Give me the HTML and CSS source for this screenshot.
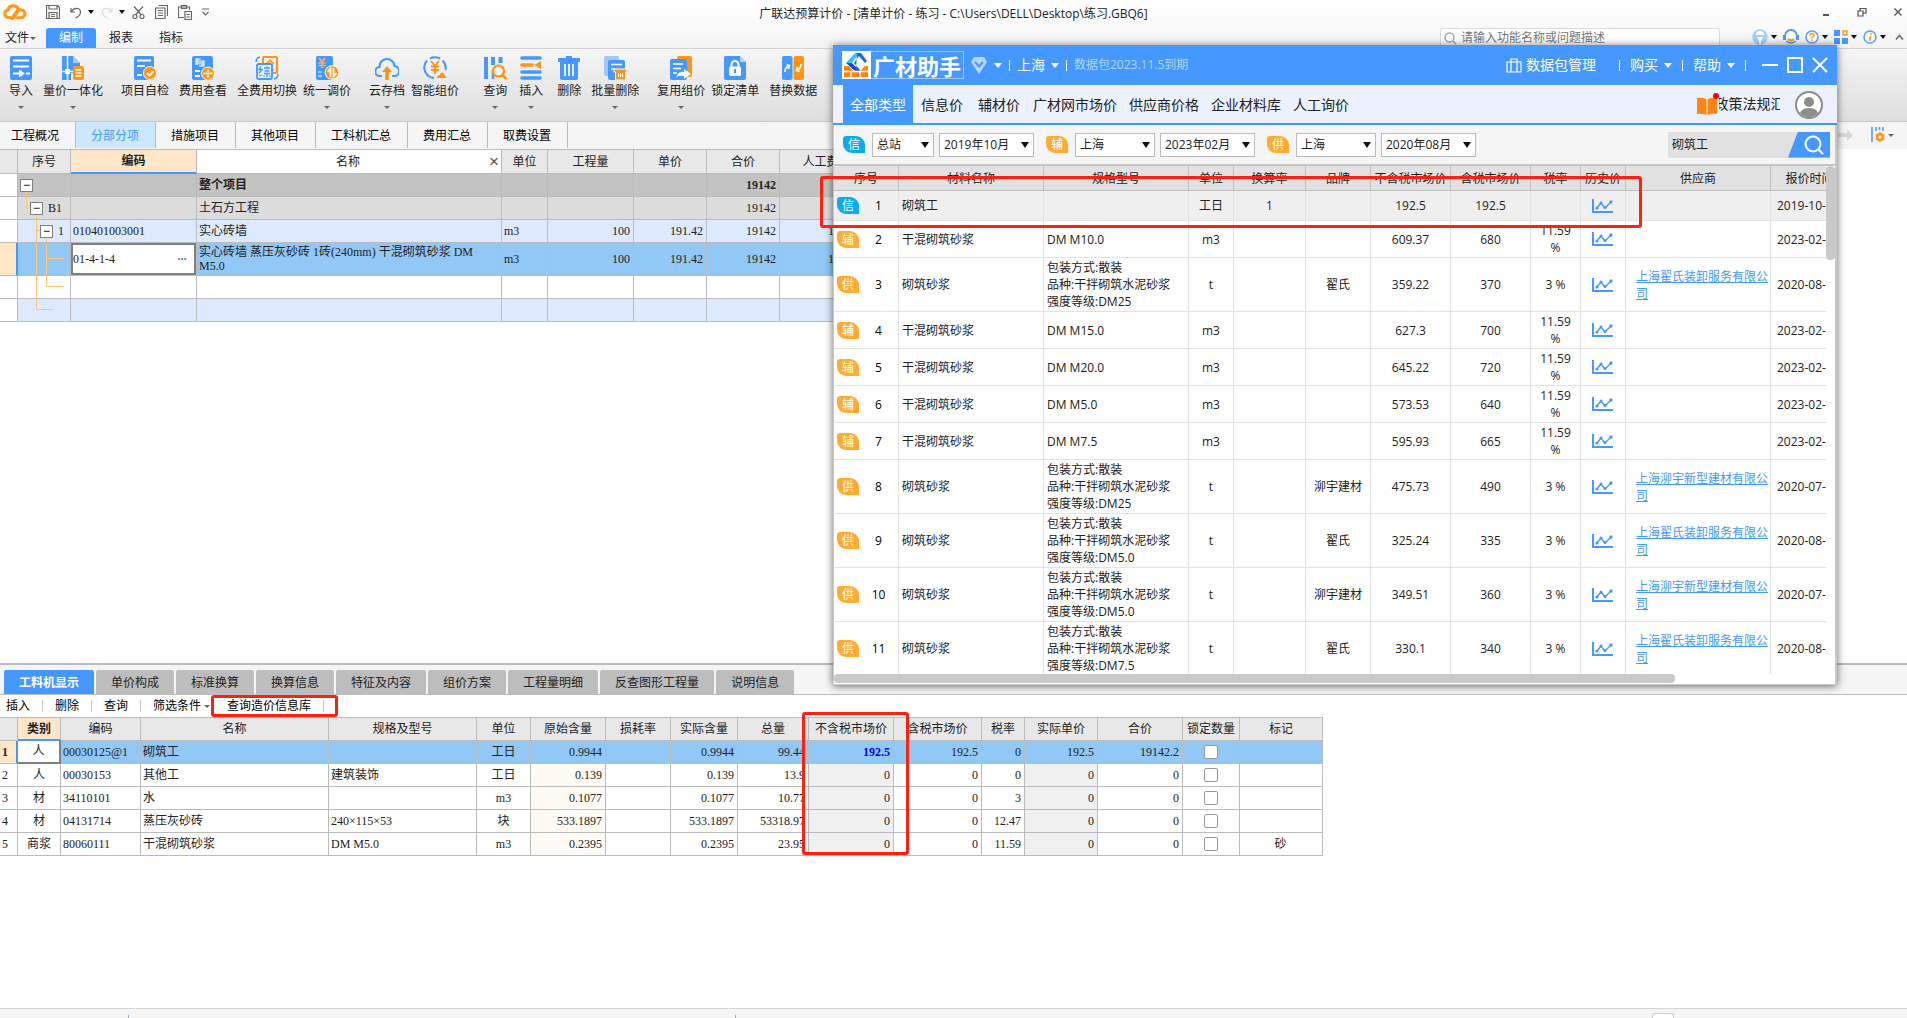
FILE: index.html
```html
<!DOCTYPE html>
<html lang="zh-CN">
<head>
<meta charset="utf-8">
<title>广联达预算计价</title>
<link rel="stylesheet" href="styles.css">
</head>
<body>
<svg class="defs" aria-hidden="true">
  <symbol id="i-chart" viewBox="0 0 22 16"><path d="M1 1v13h20" fill="none" stroke="#4498ff" stroke-width="2"/><path d="M4 11l5-6 4 5 6-6" fill="none" stroke="#4498ff" stroke-width="1.4"/><g fill="#4498ff"><circle cx="5" cy="10" r="1.5"/><circle cx="9" cy="5" r="1.5"/><circle cx="13" cy="9.500" r="1.500"/><circle cx="19" cy="4" r="1.700"/></g></symbol>
</svg>
<div class="app">
  <header class="titlebar">
    <div class="quick">
      <svg class="brand" width="24" height="18" viewBox="0 0 24 18"><g fill="none" stroke="#ff9a1c" stroke-width="3.200" stroke-linecap="round"><path d="M7 14.500H5.500a3.800 3.800 0 0 1-.6-7.500C6 2.500 13 1 15.500 6L9 15.500"/><path d="M14.500 14.800h3.500a4 4 0 1 0-3-6.800l-4 6.500"/></g></svg>
      <button aria-label="保存"><svg width="14" height="14" viewBox="0 0 14 14"><path d="M.5.500h11l2 2v11H.5zM3 .5v3.500h8V.5M3 13.500V7.500h8v6M5 9.500h4M5 11.500h4" class="ln"/></svg></button>
      <button aria-label="撤销"><svg width="12" height="13" viewBox="0 0 12 13"><path d="M1 2v4h4M1.500 5.500C4 1 11 1.500 10.500 6.500 10.200 9 8 11 5.500 12" class="ln"/></svg></button>
      <i class="tri"></i>
      <button aria-label="重做"><svg width="12" height="13" viewBox="0 0 12 13"><path d="M11 2v4H7M10.500 5.500C8 1 1 1.500 1.500 6.500 1.800 9 4 11 6.500 12" class="ln faint"/></svg></button>
      <i class="tri"></i>
      <button aria-label="剪切"><svg width="13" height="13" viewBox="0 0 13 13"><path d="M2 .5l7.500 8.500M11 .5L3.500 9" class="ln"/><circle cx="3" cy="10.500" r="2" class="ln"/><circle cx="10" cy="10.500" r="2" class="ln"/></svg></button>
      <button aria-label="复制"><svg width="13" height="14" viewBox="0 0 13 14"><path d="M3.500.500h9v10.500M.5 3h9.500v10.500H.5zM3 5.500h5M3 8h5M3 10.500h5" class="ln"/></svg></button>
      <button aria-label="粘贴"><svg width="14" height="15" viewBox="0 0 14 15"><path d="M6 12.500H.5V2h11v3M3.500.500h5v3h-5zM7 6.500h6.500v8H7zM8.500 9.500h3.500M8.500 12h3.500" class="ln"/></svg></button>
      <svg width="7" height="8" viewBox="0 0 7 8"><path d="M0 1h7M.5 4l3 3 3-3" class="ln"/></svg>
    </div>
    <h1>广联达预算计价 - [清单计价 - 练习 - C:\Users\DELL\Desktop\练习.GBQ6]</h1>
    <div class="winctl">
      <button aria-label="最小化"><svg width="10" height="10" viewBox="0 0 10 10"><path d="M2 8h6" stroke="#555" stroke-width="2"/></svg></button>
      <button aria-label="还原"><svg width="10" height="10" viewBox="0 0 10 10"><path d="M1 4h5v5H1zM3 4V1.500h6V6H6" fill="none" stroke="#555" stroke-width="1.200"/></svg></button>
      <button aria-label="关闭"><svg width="10" height="10" viewBox="0 0 10 10"><path d="M1.500 1.500l7 7M8.500 1.500l-7 7" stroke="#555" stroke-width="1.400"/></svg></button>
    </div>
  </header>

  <nav class="menubar">
    <button class="file">文件<i class="tri sm"></i></button>
    <button class="mtab on">编制</button>
    <button class="mtab">报表</button>
    <button class="mtab">指标</button>
    <div class="finder">
      <svg width="13" height="13" viewBox="0 0 13 13"><circle cx="5.500" cy="5.500" r="4.500" fill="none" stroke="#aaa" stroke-width="1.500"/><path d="M9 9l3 3" stroke="#aaa" stroke-width="1.700"/></svg>
      <input type="text" aria-label="功能搜索" placeholder="请输入功能名称或问题描述">
    </div>
    <div class="tools">
      <button aria-label="账户"><svg width="16" height="16" viewBox="0 0 16 16"><circle cx="8" cy="8" r="7.800" fill="#a4d0fb"/><path d="M4 6a4 4 0 0 1 8 0zM5 8h6l-2 4v3H7v-3z" fill="#fff"/></svg><i class="tri"></i></button>
      <button aria-label="客服"><svg width="16" height="16" viewBox="0 0 16 16"><path d="M2 9V7a6 6 0 0 1 12 0v2" fill="none" stroke="#4a9bf5" stroke-width="1.800"/><path d="M0 6h3v5H0zM13 6h3v5h-3z" fill="#4a9bf5"/><path d="M5 10q3 3 6 0" fill="none" stroke="#ff9a1c" stroke-width="2"/><path d="M3 12q5 4 10 0" fill="none" stroke="#4a9bf5" stroke-width="1.500"/></svg></button>
      <button aria-label="帮助"><svg width="14" height="14" viewBox="0 0 14 14"><circle cx="7" cy="7" r="6" fill="#fff" stroke="#55a2f8" stroke-width="1.500"/><path d="M5 5.500q0-2 2-2t2 1.800q0 1-2 2.200v1M7 9.500v1.500" fill="none" stroke="#ff9a1c" stroke-width="1.500"/></svg><i class="tri"></i></button>
      <button aria-label="应用"><svg width="14" height="14" viewBox="0 0 14 14"><path d="M0 0h6v6H0zM0 8h6v6H0zM8 8h6v6H8z" fill="#4498ff"/><path d="M9 1h4v4H9z" fill="none" stroke="#ff9a1c" stroke-width="1.500"/></svg><i class="tri"></i></button>
      <button aria-label="关于"><svg width="14" height="14" viewBox="0 0 14 14"><circle cx="7" cy="7" r="6" fill="#fff" stroke="#55a2f8" stroke-width="1.500"/><path d="M8 3l-.3 1.500M7.300 6L6.500 11" stroke="#ff9a1c" stroke-width="1.800"/></svg><i class="tri"></i></button>
      <button aria-label="折叠"><svg width="9" height="7" viewBox="0 0 9 7"><path d="M1 5.500l3.500-4 3.500 4" fill="none" stroke="#666" stroke-width="1.500"/></svg></button>
    </div>
  </nav>

  <div class="ribbon">
    <button><svg viewBox="0 0 24 24"><rect x="1" width="22" height="24" rx="2" fill="#4498ff"/><path d="M4 4.500h16M4 10.500h16" stroke="#fff" stroke-width="2"/><path d="M4 17.500h7M17 17.500h4" stroke="#fff" stroke-width="2"/><path d="M10 13.500l6 4-6 4z" fill="#fff"/></svg><span>导入</span><i class="tri sm"></i></button>
    <button><svg viewBox="0 0 24 24"><path d="M1 0h11l7 7v4h-6v6h-3v7H1z" fill="#4498ff"/><path d="M12 0l7 7h-7z" fill="#a4cdfa"/><path d="M6.500 0v24M0 15.500h12" stroke="#fff" stroke-width="1.500"/><rect x="4" y="13" width="5" height="5" fill="#fff"/><rect x="12" y="10" width="11" height="14" rx="2" fill="#ff9512"/><path d="M14.500 14h6M14.500 17h6M14.500 20h6" stroke="#fff" stroke-width="1.400"/></svg><span>量价一体化</span><i class="tri sm"></i></button>
    <button class="group"><svg viewBox="0 0 24 24"><rect x="1" width="20" height="24" rx="2" fill="#4498ff"/><path d="M4 4.500h14M4 10h8M4 19h5" stroke="#fff" stroke-width="2"/><circle cx="17" cy="17" r="6.500" fill="#ff9512" stroke="#fff"/><path d="M14 17l2.500 2.500 4-4.500" fill="none" stroke="#fff" stroke-width="2"/></svg><span>项目自检</span></button>
    <button><svg viewBox="0 0 24 24"><rect x="1" width="21" height="24" rx="2" fill="#4498ff"/><path d="M4 2h6v7H4zM8 4h6v7H8z" fill="#d6e9ff" stroke="#4498ff" stroke-width=".6"/><path d="M4 15h5M4 20h5" stroke="#fff" stroke-width="2"/><circle cx="17" cy="17.500" r="6.500" fill="#ff9512" stroke="#fff"/><path d="M12.500 17.500h9" stroke="#fff" stroke-width="1.700"/><circle cx="17" cy="14.500" r="1.200" fill="#fff"/><circle cx="17" cy="20.500" r="1.200" fill="#fff"/></svg><span>费用查看</span></button>
    <button><svg viewBox="0 0 24 24"><rect x="8" y="1" width="14" height="16" rx="1" fill="none" stroke="#ff9512" stroke-width="2"/><path d="M11 8l4-4 4 4M15 6v8M12 10h6M12 14h7" fill="none" stroke="#ff9512" stroke-width="1.500"/><rect x="2" y="8" width="15" height="15" rx="1.500" fill="#e6f1ff" stroke="#4498ff" stroke-width="1.800"/><path d="M6 10.500l-2 3h3l-3 4M4 20l3-1M9 12h6M12 10.500v2M9.500 15h5M9 17.500h6M12 17.500v3.500M9.500 19.500l-1 1M14.500 19.500l1 1" fill="none" stroke="#4498ff" stroke-width="1.300"/><path d="M1 6q0-4 4-5M23 18q0 4-4 5" fill="none" stroke="#4498ff" stroke-width="1.500"/></svg><span>全费用切换</span></button>
    <button class="tight"><svg viewBox="0 0 24 24"><rect x="1" width="17" height="24" rx="2" fill="#4498ff"/><path d="M4 2l3 4 3-4M7 6v6M3.500 7h7M3.500 9.500h7" stroke="#ffb24d" fill="none" stroke-width="1.500"/><path d="M3 16h4M3 20h4" stroke="#bcdcff" stroke-width="1.500"/><circle cx="17" cy="16.500" r="6.800" fill="#ff9512" stroke="#fff"/><path d="M15.500 21v-8.500l-3 3.500M18.500 12v8.500l3-3.500" fill="none" stroke="#fff" stroke-width="1.800"/></svg><span>统一调价</span><i class="tri sm"></i></button>
    <button class="group"><svg viewBox="0 0 24 24"><path d="M7 20H5A4.500 4.500 0 0 1 4.500 11 7.500 7.500 0 0 1 19.500 10 5 5 0 0 1 19 20h-2" fill="none" stroke="#4498ff" stroke-width="2.200"/><path d="M12 10l5 6h-3.200v8h-3.600v-8H7z" fill="#ff9512"/></svg><span>云存档</span><i class="tri sm"></i></button>
    <button class="tight"><svg viewBox="0 0 24 24"><path d="M11 22A10.500 10.500 0 0 1 4 4.500M7 2.500A10.500 10.500 0 0 1 17 2.500M19.500 4.500A10.500 10.500 0 0 1 22.500 14" fill="none" stroke="#4498ff" stroke-width="2"/><path d="M8 5l4 5 4-5M12 10v8M8 10.500h8M8 14h8" fill="none" stroke="#ff9512" stroke-width="2"/><path d="M14 22q0-3 3-3 1-4 4-1.500 0 1.500 3 4.500z" fill="#ff9512"/></svg><span>智能组价</span></button>
    <button class="wide"><svg viewBox="0 0 24 24"><path d="M3 1v22M10 1v8M17.500 1v6" stroke="#4498ff" stroke-width="4"/><path d="M10 14v9" stroke="#4498ff" stroke-width="2.500"/><circle cx="15.500" cy="15" r="5.500" fill="#f4f4f4" stroke="#ff9512" stroke-width="2.200"/><path d="M19.500 19l4 4" stroke="#ff9512" stroke-width="2.500"/></svg><span>查询</span><i class="tri sm"></i></button>
    <button class="near"><svg viewBox="0 0 24 24"><path d="M3 2h18M3 16h18M3 22h18" stroke="#4498ff" stroke-width="3.600" stroke-linecap="round"/><path d="M3 9h10" stroke="#ff9512" stroke-width="3.600" stroke-linecap="round"/><path d="M22 5v8l-7-4z" fill="#ff9512"/></svg><span>插入</span><i class="tri sm"></i></button>
    <button class="mid"><svg viewBox="0 0 24 24"><path d="M9 0h6v2h8v4h-2v16q0 2-2 2H5q-2 0-2-2V6H1V2h8z" fill="#4498ff"/><path d="M8 8v12M12 8v12M16 8v12" stroke="#fff" stroke-width="1.700"/></svg><span>删除</span></button>
    <button><svg viewBox="0 0 24 24"><rect x="1" width="15" height="20" rx="2" fill="#9ccafb"/><rect x="5" y="4" width="17" height="20" rx="2" fill="#4498ff"/><path d="M8 8.500h11M8 13h4" stroke="#fff" stroke-width="1.700"/><path d="M11 13h13v3h-1.500v8h-10v-8H11z" fill="#ff9512" stroke="#fff"/><path d="M15.500 17v4M17.500 17v4M19.500 17v4" stroke="#fff"/></svg><span>批量删除</span><i class="tri sm"></i></button>
    <button class="group"><svg viewBox="0 0 24 24"><rect x="8" width="15" height="21" rx="2" fill="#ff9512"/><rect x="1" y="3" width="17" height="21" rx="2" fill="#4498ff"/><path d="M4 8h10M4 12.500h8M4 17h4" stroke="#fff" stroke-width="1.700"/><path d="M7 21q3-6 8-5v-3l7 5-7 5v-3q-4-1-8 1z" fill="#fff"/></svg><span>复用组价</span><i class="tri sm"></i></button>
    <button class="tight"><svg viewBox="0 0 24 24"><path d="M3 0h14l6 6v16q0 2-2 2H3q-2 0-2-2V2q0-2 2-2z" fill="#4498ff"/><path d="M17 0l6 6h-6z" fill="#b9d9fb"/><rect x="6" y="10.500" width="12" height="9.500" rx="1.500" fill="#fff"/><path d="M8.500 11V8.500a3.500 3.500 0 0 1 7 0V11" fill="none" stroke="#fff" stroke-width="2"/><path d="M12 13v4" stroke="#4498ff" stroke-width="2.200"/></svg><span>锁定清单</span></button>
    <button><svg viewBox="0 0 24 24"><rect x="1" width="10.500" height="24" rx="2" fill="#4498ff"/><rect x="12.500" width="10.500" height="24" rx="2" fill="#ff9512"/><path d="M4 16q0-5 4-6M5.500 8.500l3 1-1 3.500M20 8q0 5-4 6M18.500 15.500l-3-1 1-3.500" fill="none" stroke="#fff" stroke-width="1.700"/></svg><span>替换数据</span></button>
  </div>

  <div class="sheets">
    <button class="first">工程概况</button><button class="on">分部分项</button><button>措施项目</button><button>其他项目</button><button>工料机汇总</button><button>费用汇总</button><button>取费设置</button>
    <div class="nav-end">
      <svg width="16" height="12" viewBox="0 0 16 12"><path d="M0 4h9V0l6 6-6 6V8H0z" fill="#d8d8d8"/></svg>
      <button aria-label="列设置"><svg width="14" height="16" viewBox="0 0 14 16"><path d="M1 0v15M5 0v4M8.500 0v3M12 0v4" stroke="#4498ff" stroke-width="1.500"/><circle cx="9" cy="10" r="3" fill="none" stroke="#ff9512" stroke-width="2.500"/><path d="M9 5v10M4.500 7.500l9 5M4.500 12.500l9-5" stroke="#ff9512" stroke-width="1.400"/><circle cx="9" cy="10" r="1.500" fill="#fff"/></svg><i class="tri sm"></i></button>
    </div>
  </div>

  <main class="upper">
    <table class="grid bill">
      <colgroup><col><col><col><col><col><col><col><col><col></colgroup>
      <thead><tr><th></th><th>序号</th><th class="cur">编码</th><th class="name"><div><span>名称</span><button aria-label="关闭列">×</button></div></th><th>单位</th><th>工程量</th><th>单价</th><th>合价</th><th>人工费</th></tr></thead>
      <tbody>
        <tr class="lv0"><td></td><td class="tree"><svg width="52" height="22"><path d="M8.500 17v5"/></svg><button class="t0" aria-label="收起">−</button></td><td></td><td>整个项目</td><td></td><td></td><td></td><td class="r">19142</td><td></td></tr>
        <tr class="lv1"><td></td><td class="tree"><svg width="52" height="22"><path d="M8.500 0v11h4M18.500 17v5"/></svg><button class="t1" aria-label="收起">−</button>B1</td><td></td><td>土石方工程</td><td></td><td></td><td></td><td class="r">19142</td><td></td></tr>
        <tr class="lv2"><td></td><td class="tree"><svg width="52" height="22"><path d="M18.500 0v22M18.500 10.500h4M28.500 17v5"/></svg><button class="t2" aria-label="收起">−</button>1</td><td>010401003001</td><td>实心砖墙</td><td>m3</td><td class="r">100</td><td class="r">191.42</td><td class="r">19142</td><td class="r">19142</td></tr>
        <tr class="sel"><td></td><td class="tree"><svg width="52" height="32"><path d="M18.500 0v32M28.500 0v32M28.500 15.500h17"/></svg></td><td class="edit"><div><input type="text" aria-label="编码" value="01-4-1-4"><button aria-label="选择">•••</button></div></td><td class="wrap">实心砖墙 蒸压灰砂砖 1砖(240mm) 干混砌筑砂浆 DM M5.0</td><td>m3</td><td class="r">100</td><td class="r">191.42</td><td class="r">19142</td><td class="r">19142</td></tr>
        <tr><td></td><td class="tree"><svg width="52" height="22"><path d="M18.500 0v22M28.500 0v10.500h17"/></svg></td><td></td><td></td><td></td><td></td><td></td><td></td><td></td></tr>
        <tr class="lv2"><td></td><td class="tree"><svg width="52" height="22"><path d="M18.500 0v10.500h17"/></svg></td><td></td><td></td><td></td><td></td><td></td><td></td><td></td></tr>
      </tbody>
    </table>
  </main>

  <section class="lower">
    <div class="dtabs"><button class="on">工料机显示</button><button>单价构成</button><button>标准换算</button><button>换算信息</button><button>特征及内容</button><button>组价方案</button><button>工程量明细</button><button>反查图形工程量</button><button>说明信息</button></div>
    <div class="dbar"><button>插入</button><button>删除</button><button>查询</button><button class="filter">筛选条件<i class="tri sm"></i></button><button class="hot">查询造价信息库</button></div>
    <div class="res-wrap">
    <table class="grid res">
      <colgroup><col><col><col><col><col><col><col><col><col><col><col><col><col><col><col><col><col></colgroup>
      <thead><tr><th></th><th class="cur">类别</th><th>编码</th><th>名称</th><th>规格及型号</th><th>单位</th><th>原始含量</th><th>损耗率</th><th>实际含量</th><th>总量</th><th>不含税市场价</th><th>含税市场价</th><th>税率</th><th>实际单价</th><th>合价</th><th>锁定数量</th><th>标记</th></tr></thead>
      <tbody>
        <tr class="sel"><td>1</td><td>人</td><td>00030125@1</td><td>砌筑工</td><td></td><td>工日</td><td>0.9944</td><td></td><td>0.9944</td><td>99.44</td><td>192.5</td><td>192.5</td><td>0</td><td>192.5</td><td>19142.2</td><td><input type="checkbox" aria-label="锁定第1行"></td><td></td></tr>
        <tr><td>2</td><td>人</td><td>00030153</td><td>其他工</td><td>建筑装饰</td><td>工日</td><td>0.139</td><td></td><td>0.139</td><td>13.9</td><td>0</td><td>0</td><td>0</td><td>0</td><td>0</td><td><input type="checkbox" aria-label="锁定第2行"></td><td></td></tr>
        <tr><td>3</td><td>材</td><td>34110101</td><td>水</td><td></td><td>m3</td><td>0.1077</td><td></td><td>0.1077</td><td>10.77</td><td>0</td><td>0</td><td>3</td><td>0</td><td>0</td><td><input type="checkbox" aria-label="锁定第3行"></td><td></td></tr>
        <tr><td>4</td><td>材</td><td>04131714</td><td>蒸压灰砂砖</td><td>240×115×53</td><td>块</td><td>533.1897</td><td></td><td>533.1897</td><td>53318.97</td><td>0</td><td>0</td><td>12.47</td><td>0</td><td>0</td><td><input type="checkbox" aria-label="锁定第4行"></td><td></td></tr>
        <tr><td>5</td><td>商浆</td><td>80060111</td><td>干混砌筑砂浆</td><td>DM M5.0</td><td>m3</td><td>0.2395</td><td></td><td>0.2395</td><td>23.95</td><td>0</td><td>0</td><td>11.59</td><td>0</td><td>0</td><td><input type="checkbox" aria-label="锁定第5行"></td><td>砂</td></tr>
      </tbody>
    </table>
    </div>
  </section>
  <footer class="status"><i></i><i></i><b></b></footer>
</div>

<section class="helper" aria-label="广材助手">
  <header class="h-title">
    <div class="h-logo">
      <svg width="29" height="28" viewBox="0 0 29 28"><path d="M0 0h29v28H0z" fill="#fff"/><path d="M13 2L4 12h6l7-10z" fill="#2cc5ff"/><path d="M4 12l9 8h5l-8-8z" fill="#0a4fc4"/><path d="M15 2h4l6 8-2 2-6-7-5 7 6 7h-4" fill="#1568e0"/><path d="M2 15h5l5 5h6l5-5h3v11H2z" fill="#ff8412"/><path d="M2 20.500h24M9 20v6M18 20v6" stroke="#fff" stroke-width="1.300"/></svg>
      <strong>广材助手</strong>
    </div>
    <svg class="gem" width="16" height="17" viewBox="0 0 16 17"><path d="M3 0h10l3 5-8 12L0 5z" fill="#b5d8ff"/><path d="M4 5l4 4.500L12 5" fill="none" stroke="#4498ff" stroke-width="2"/></svg>
    <i class="dn"></i><i class="bar"></i>
    <button>上海<i class="dn"></i></button><i class="bar"></i>
    <span class="exp">数据包2023.11.5到期</span>
    <div class="h-right">
      <button class="pkg"><svg width="16" height="15" viewBox="0 0 16 15"><path d="M1 4h14v10H1zM5 4V1h6v3M5 4v10M11 4v10" fill="none" stroke="#fff" stroke-width="1.200"/></svg>数据包管理</button><i class="bar"></i>
      <button>购买<i class="dn"></i></button><i class="bar"></i>
      <button>帮助<i class="dn"></i></button><i class="bar"></i>
      <button class="win" aria-label="最小化"><svg width="16" height="16" viewBox="0 0 16 16"><path d="M0 8h16" stroke="#fff" stroke-width="2"/></svg></button>
      <button class="win" aria-label="最大化"><svg width="16" height="16" viewBox="0 0 16 16"><path d="M1 1h14v14H1z" fill="none" stroke="#fff" stroke-width="2"/></svg></button>
      <button class="win" aria-label="关闭"><svg width="16" height="16" viewBox="0 0 16 16"><path d="M1 1l14 14M15 1L1 15" stroke="#fff" stroke-width="2"/></svg></button>
    </div>
  </header>
  <nav class="h-tabs">
    <button class="on">全部类型</button><button>信息价</button><button>辅材价</button><button>广材网市场价</button><button>供应商价格</button><button>企业材料库</button><button>人工询价</button>
    <a class="law" href="#"><svg width="22" height="24" viewBox="0 0 22 24"><path d="M0 6q5-1 9 1v16q-4-2-9-1zM20 6q-5-1-9 1v16q4-2 9-1z" fill="#ff8412"/><path d="M10 7v16" stroke="#ffc58a" stroke-width="2"/><circle cx="19" cy="4" r="3" fill="#f00"/></svg><span>政策法规汇</span></a>
    <button class="me" aria-label="用户"><svg width="28" height="28" viewBox="0 0 28 28"><circle cx="14" cy="14" r="13" fill="#fff" stroke="#8c8c8c" stroke-width="2"/><circle cx="14" cy="11" r="5" fill="#8c8c8c"/><path d="M5 22q2-5 9-5t9 5q-4 4-9 4t-9-4z" fill="#8c8c8c"/></svg></button>
  </nav>
  <div class="h-filter">
    <span class="tag info">信</span>
    <span class="sel-box w1"><select aria-label="信息价地区"><option>总站</option></select></span>
    <span class="sel-box w3"><select aria-label="信息价月份"><option>2019年10月</option></select></span>
    <span class="tag">辅</span>
    <span class="sel-box w2"><select aria-label="辅材价地区"><option>上海</option></select></span>
    <span class="sel-box w3"><select aria-label="辅材价月份"><option>2023年02月</option></select></span>
    <span class="tag">供</span>
    <span class="sel-box w2"><select aria-label="供应商地区"><option>上海</option></select></span>
    <span class="sel-box w3"><select aria-label="供应商月份"><option>2020年08月</option></select></span>
    <div class="h-search"><input type="text" aria-label="材料搜索" value="砌筑工"><button aria-label="搜索"><svg width="20" height="20" viewBox="0 0 20 20"><circle cx="9" cy="9" r="7.500" fill="none" stroke="#fff" stroke-width="2"/><path d="M14 14l5 5" stroke="#fff" stroke-width="2"/></svg></button></div>
  </div>
  <div class="h-body">
    <div class="h-scroll">
      <table class="mat">
        <colgroup><col><col><col><col><col><col><col><col><col><col><col><col></colgroup>
        <thead><tr><th>序号</th><th>材料名称</th><th>规格型号</th><th>单位</th><th>换算率</th><th>品牌</th><th>不含税市场价</th><th>含税市场价</th><th>税率</th><th>历史价</th><th>供应商</th><th>报价时间</th></tr></thead>
        <tbody>
          <tr class="hl"><td><div><span class="tag info">信</span><b>1</b></div></td><td>砌筑工</td><td></td><td>工日</td><td>1</td><td></td><td>192.5</td><td>192.5</td><td></td><td><svg><use href="#i-chart"/></svg></td><td></td><td>2019-10-01</td></tr>
          <tr><td><div><span class="tag">辅</span><b>2</b></div></td><td>干混砌筑砂浆</td><td>DM M10.0</td><td>m3</td><td></td><td></td><td>609.37</td><td>680</td><td>11.59 %</td><td><svg><use href="#i-chart"/></svg></td><td></td><td>2023-02-01</td></tr>
          <tr><td><div><span class="tag">供</span><b>3</b></div></td><td>砌筑砂浆</td><td>包装方式:散装<br>品种:干拌砌筑水泥砂浆<br>强度等级:DM25</td><td>t</td><td></td><td>翟氏</td><td>359.22</td><td>370</td><td>3 %</td><td><svg><use href="#i-chart"/></svg></td><td><a href="#">上海翟氏装卸服务有限公司</a></td><td>2020-08-01</td></tr>
          <tr><td><div><span class="tag">辅</span><b>4</b></div></td><td>干混砌筑砂浆</td><td>DM M15.0</td><td>m3</td><td></td><td></td><td>627.3</td><td>700</td><td>11.59 %</td><td><svg><use href="#i-chart"/></svg></td><td></td><td>2023-02-01</td></tr>
          <tr><td><div><span class="tag">辅</span><b>5</b></div></td><td>干混砌筑砂浆</td><td>DM M20.0</td><td>m3</td><td></td><td></td><td>645.22</td><td>720</td><td>11.59 %</td><td><svg><use href="#i-chart"/></svg></td><td></td><td>2023-02-01</td></tr>
          <tr><td><div><span class="tag">辅</span><b>6</b></div></td><td>干混砌筑砂浆</td><td>DM M5.0</td><td>m3</td><td></td><td></td><td>573.53</td><td>640</td><td>11.59 %</td><td><svg><use href="#i-chart"/></svg></td><td></td><td>2023-02-01</td></tr>
          <tr><td><div><span class="tag">辅</span><b>7</b></div></td><td>干混砌筑砂浆</td><td>DM M7.5</td><td>m3</td><td></td><td></td><td>595.93</td><td>665</td><td>11.59 %</td><td><svg><use href="#i-chart"/></svg></td><td></td><td>2023-02-01</td></tr>
          <tr><td><div><span class="tag">供</span><b>8</b></div></td><td>砌筑砂浆</td><td>包装方式:散装<br>品种:干拌砌筑水泥砂浆<br>强度等级:DM25</td><td>t</td><td></td><td>泖宇建材</td><td>475.73</td><td>490</td><td>3 %</td><td><svg><use href="#i-chart"/></svg></td><td><a href="#">上海泖宇新型建材有限公司</a></td><td>2020-07-01</td></tr>
          <tr><td><div><span class="tag">供</span><b>9</b></div></td><td>砌筑砂浆</td><td>包装方式:散装<br>品种:干拌砌筑水泥砂浆<br>强度等级:DM5.0</td><td>t</td><td></td><td>翟氏</td><td>325.24</td><td>335</td><td>3 %</td><td><svg><use href="#i-chart"/></svg></td><td><a href="#">上海翟氏装卸服务有限公司</a></td><td>2020-08-01</td></tr>
          <tr><td><div><span class="tag">供</span><b>10</b></div></td><td>砌筑砂浆</td><td>包装方式:散装<br>品种:干拌砌筑水泥砂浆<br>强度等级:DM5.0</td><td>t</td><td></td><td>泖宇建材</td><td>349.51</td><td>360</td><td>3 %</td><td><svg><use href="#i-chart"/></svg></td><td><a href="#">上海泖宇新型建材有限公司</a></td><td>2020-07-01</td></tr>
          <tr><td><div><span class="tag">供</span><b>11</b></div></td><td>砌筑砂浆</td><td>包装方式:散装<br>品种:干拌砌筑水泥砂浆<br>强度等级:DM7.5</td><td>t</td><td></td><td>翟氏</td><td>330.1</td><td>340</td><td>3 %</td><td><svg><use href="#i-chart"/></svg></td><td><a href="#">上海翟氏装卸服务有限公司</a></td><td>2020-08-01</td></tr>
        </tbody>
      </table>
    </div>
    <div class="vbar"><i></i></div>
  </div>
  <div class="hbar"><i></i></div>
  <div class="mark mark-row"></div>
</section>
</body>
</html>
```
FILE: styles.css
```css
*, *::after { box-sizing: border-box; }
html, body { height: 100%; margin: 0; }
body {
  position: relative;
  overflow: hidden;
  background: #fff;
  color: #222;
  font: 12px/16px "Open Sans", "Noto Sans CJK SC", sans-serif;
}
button { border: 0; padding: 0; margin: 0; background: none; font: inherit; color: inherit; white-space: nowrap; }
input, select { font: inherit; color: inherit; margin: 0; }
svg { flex: none; }
.defs { position: absolute; width: 0; height: 0; }
.tri { flex: none; display: inline-block; border: 3px solid transparent; border-top: 4px solid #111; border-bottom: 0; }
.tri.sm { border-top: 3px solid #666; }
.ln { fill: none; stroke: #666; stroke-width: 1.2; }
.ln.faint { stroke: #ddd; }

.app { height: 100%; display: flex; flex-direction: column; }

/* window title */
.titlebar { flex: none; height: 28px; display: grid; grid-template-columns: 1fr auto 1fr; background: linear-gradient(#fff, #f9f9f9); }
.titlebar h1 { margin: 0; font-size: 12px; font-weight: 400; line-height: 28px; }
.quick { display: flex; align-items: center; gap: 10px; padding: 0 0 4px 3px; }
.quick svg { display: block; }
.quick .brand { margin-right: 9px; }
.quick .tri { margin: 0 -3px 0 -4px; }
.winctl { display: flex; justify-content: flex-end; align-items: center; gap: 26px; padding: 0 4px 4px 0; }
.winctl svg { display: block; }

.menubar { flex: none; height: 21px; display: flex; align-items: stretch; border-bottom: 1px solid #d4d4d4; background: linear-gradient(#f9f9f9, #f3f3f3); }
.file { width: 46px; padding-left: 5px; display: flex; align-items: center; gap: 1px; }
.mtab { width: 50px; }
.mtab.on { background: #4498ff; color: #fff; border-radius: 3px 3px 0 0; }
.finder { margin-left: auto; width: 280px; display: flex; align-items: center; gap: 4px; padding: 0 3px; background: #fff; border: 1px solid #ddd; border-radius: 3px; }
.finder input { flex: 1; min-width: 0; height: 16px; padding: 0; border: 0; background: none; outline: 0; }
.finder input::placeholder { color: #777; opacity: 1; }
.tools { display: flex; align-items: center; gap: 6px; padding: 0 3px 2px 32px; }
.tools button { display: flex; align-items: center; gap: 3px; }
.tools button:last-child { padding-left: 3px; }

.ribbon { flex: none; height: 73px; display: flex; align-items: flex-start; padding: 7px 9px 0; border-bottom: 1px solid #cacaca; background: linear-gradient(#f5f5f5, #dedede); }
.ribbon button { display: flex; flex-direction: column; align-items: center; }
.ribbon button + button { margin-left: 10px; }
.ribbon button + .tight { margin-left: 6px; }
.ribbon button + .near { margin-left: 12px; }
.ribbon button + .mid { margin-left: 14px; }
.ribbon button + .group { margin-left: 18px; }
.ribbon button + .wide { margin-left: 24px; }
.ribbon svg { width: 24px; height: 24px; }
.ribbon span { margin: 2px 0 6px; line-height: 18px; }

.sheets { flex: none; height: 27px; display: flex; align-items: stretch; padding-bottom: 1px; background: #f5f5f5; }
.sheets > button { padding: 1px 16px 0 15px; border-right: 1px solid #bbb; color: #000; }
.sheets > .first { padding-left: 11px; }
.sheets > .on { background: #cce8ff; color: #4498ff; }
.nav-end { margin-left: auto; display: flex; align-items: center; gap: 17px; padding-right: 13px; }
.nav-end button { display: flex; align-items: center; gap: 3px; }

.upper { flex: 3 1 0; min-height: 0; overflow: hidden; }
.lower { flex: 2 1 0; min-height: 0; overflow: hidden; border-top: 2px solid #bbb; background: #fff; }

/* data grids */
.grid { table-layout: fixed; border-collapse: separate; border-spacing: 0; font: 12px/14px "Liberation Serif", "Noto Sans CJK SC", serif; }
.grid th, .grid td { height: 23px; padding: 0 2px 1px; border-right: 1px solid #bbb; border-bottom: 1px solid #bbb; white-space: nowrap; overflow: hidden; }
.grid th { height: 24px; padding-bottom: 0; border-top: 1px solid #bbb; background: #e8e8e8; font-weight: 400; text-align: center; }
.grid .cur { background: #ffe6c8; border-bottom: 2px solid #4498ff; font-weight: 700; }
.grid .r { text-align: right; padding-right: 3px; }
.grid .sel > td { background: #92c8f6; }
.grid .sel > td:first-child { background: #ffe6c8; border-right: 2px solid #4498ff; }

.bill { width: 862px; }
.bill th { height: 25px; }
.bill col:nth-child(1) { width: 18px; }
.bill col:nth-child(2) { width: 53px; }
.bill col:nth-child(3) { width: 126px; }
.bill col:nth-child(4) { width: 305px; }
.bill col:nth-child(5) { width: 46px; }
.bill col:nth-child(6) { width: 86px; }
.bill col:nth-child(7) { width: 73px; }
.bill col:nth-child(8) { width: 73px; }
.bill col:nth-child(9) { width: 82px; }
.bill .name { background: #fff; }
.name div { display: flex; align-items: center; }
.name span { flex: 1; padding-left: 8px; }
.name button { font: 17px/14px "Liberation Sans", sans-serif; color: #555; }
.bill .lv0 td { background: #c3c3c3; font-weight: 700; }
.bill .lv1 td { background: #dcdcdc; }
.bill .lv2 td { background: #dce9ff; }
.bill tbody tr:not(.sel) td:first-child { background: #fff; }
.bill .sel td { height: 33px; }
.bill .sel .wrap { white-space: normal; }
.tree { position: relative; }
.tree svg { position: absolute; left: 0; top: 0; }
.tree svg path { fill: none; stroke: #ffc673; stroke-width: 1; }
.tree button { position: relative; width: 13px; height: 13px; margin-right: 5px; border: 1px solid #808080; background: #fff; font: 12px/11px "Liberation Sans", sans-serif; color: #000; }
.tree .t1 { margin-left: 10px; }
.tree .t2 { margin-left: 20px; }
.grid .edit { padding: 0; }
.edit div { display: flex; align-items: center; height: 32px; border: 2px solid #808080; background: #fff; }
.edit input { flex: 1; min-width: 0; padding: 0; border: 0; outline: 0; }
.edit button { width: 24px; text-align: center; font-size: 9px; color: #3a8ad0; }

/* lower detail panel */
.dtabs { display: flex; gap: 2px; padding: 5px 4px 0; background: #f5f5f5; border-bottom: 1px solid #bbb; }
.dtabs button { height: 24px; padding: 1px 15px 0; background: #bdbdbd; border-radius: 2px 2px 0 0; }
.dtabs .on { background: #4498ff; color: #fff; font-weight: 700; }
.dbar { height: 22px; display: flex; align-items: center; padding-left: 6px; color: #000; }
.dbar button { display: flex; align-items: center; height: 12px; padding-right: 12px; margin-right: 12px; border-right: 1px solid #ccc; }
.dbar .filter { border: 0; padding: 0; gap: 3px; margin: 0; }
.dbar .hot { position: relative; margin-left: 17px; }
.dbar .hot::after { content: ""; position: absolute; inset: -5px -15px -5px -16px; border: 3px solid #ff2010; border-radius: 3px; }
.res-wrap { position: relative; width: 1323px; }
.res-wrap::after { content: ""; position: absolute; left: 802px; top: -5px; width: 107px; height: 143px; border: 3px solid #ff2010; border-radius: 3px; }
.res { width: 1323px; }
.res col:nth-child(1) { width: 18px; }
.res col:nth-child(2) { width: 43px; }
.res col:nth-child(3) { width: 80px; }
.res col:nth-child(4) { width: 188px; }
.res col:nth-child(5) { width: 148px; }
.res col:nth-child(6) { width: 54px; }
.res col:nth-child(7) { width: 75px; }
.res col:nth-child(8) { width: 65px; }
.res col:nth-child(9) { width: 67px; }
.res col:nth-child(10) { width: 71px; }
.res col:nth-child(11) { width: 85px; }
.res col:nth-child(12) { width: 88px; }
.res col:nth-child(13) { width: 43px; }
.res col:nth-child(14) { width: 73px; }
.res col:nth-child(15) { width: 85px; }
.res col:nth-child(16) { width: 57px; }
.res col:nth-child(17) { width: 83px; }
.res td:nth-child(n+7) { text-align: right; padding-right: 3px; }
.res td:nth-child(1) { background: #fff; }
.res td:nth-child(2), .res td:nth-child(6), .res td:nth-child(n+16) { text-align: center; }
.res tr:not(.sel) td:nth-child(7) { background: #fffaf4; }
.res tr:not(.sel) td:nth-child(11), .res tr:not(.sel) td:nth-child(14) { background: #f0f0f0; }
.res .sel td:nth-child(1) { font-weight: 700; }
.res .sel td:nth-child(2) { background: #fff; border-right: 2px solid #808080; border-bottom: 2px solid #808080; }
.res .sel td:nth-child(11) { color: #00f; font-weight: 700; }
.res input { appearance: none; display: inline-block; vertical-align: middle; width: 14px; height: 14px; border: 1px solid #999; border-radius: 2px; background: #fff; }

.status { flex: none; height: 10px; display: grid; grid-template-columns: 129px 607px 1fr 255px; align-items: end; border-top: 1px solid #d4d4d4; background: #f4f4f4; }
.status i { height: 3px; border-right: 1px solid #9ab; }
.status b { grid-column: 4; width: 22px; height: 5px; background: #fff; border: 1px solid #ccc; border-bottom: 0; border-radius: 3px 3px 0 0; }

/* floating assistant window */
.helper {
  position: absolute; left: 833px; right: 70px; top: 45px; height: 640px;
  display: flex; flex-direction: column;
  background: #fff; border: solid #c8c8c8; border-width: 0 2px 1px 1px;
  box-shadow: 0 1px 8px rgba(0, 0, 0, .6);
}
.h-title { flex: none; height: 40px; display: flex; align-items: center; gap: 7px; padding: 0 9px; margin: 0 -2px 0 -1px; background: #4498ff; color: #fff; font-size: 14px; line-height: 20px; }
.h-logo { display: flex; align-items: center; width: 122px; height: 28px; border: 1px solid #9ccafb; border-left: 0; }
.h-logo strong { padding-left: 2px; font: 700 22px/26px "Noto Sans CJK SC", sans-serif; }
.h-title button { display: flex; align-items: center; gap: 6px; }
.dn { flex: none; display: inline-block; border: 4px solid transparent; border-top: 5px solid #fff; border-bottom: 0; }
.bar { flex: none; width: 1px; height: 11px; background: #fff; }
.exp { font-size: 12px; color: #b0d5ff; }
.h-right { margin-left: auto; display: flex; align-items: center; gap: 10px; }
.h-title .pkg { gap: 4px; margin-right: 13px; }
.h-title .bar + .win { margin-left: 6px; }
.win + .win { margin-left: -1px; }

.h-tabs { flex: none; height: 40px; display: flex; align-items: stretch; margin: 0 -2px 0 -1px; padding: 0 14px 0 10px; border-bottom: 2px solid #4498ff; background: #ebf1ff; font-size: 14px; }
.h-tabs > button { padding: 2px 6px 0; }
.h-tabs > .on { padding: 2px 7px 0; background: #4498ff; color: #fff; }
.h-tabs > .on + button { padding: 2px 8px 0; }
.h-tabs > .on + button + button { padding: 2px 7px 0; }
.law { margin-left: auto; display: flex; align-items: center; color: inherit; text-decoration: none; }
.law span { width: 61px; display: flex; justify-content: center; overflow: hidden; white-space: nowrap; }
.h-tabs > .me { padding: 4px 0 0 15px; }

.h-filter { flex: none; height: 39px; display: flex; align-items: center; gap: 5px; padding: 0 5px 0 9px; background: #f5f5f5; }
.tag { flex: none; width: 22px; height: 17px; border-radius: 3px 9px 0 9px; background: #ffac35; color: #fff; text-align: center; line-height: 17px; }
.tag.info { background: #0cabf2; }
.h-filter .tag { margin-right: 2px; }
.h-filter .sel-box + .tag { margin-left: 7px; }
.sel-box { position: relative; height: 24px; }
.sel-box::after { content: ""; position: absolute; right: 5px; top: 9px; border: 4px solid transparent; border-top: 6px solid #111; border-bottom: 0; pointer-events: none; }
.sel-box select { appearance: none; width: 100%; height: 24px; padding: 0 4px; border: 1px solid #bbb; border-radius: 0; background: #fff; }
.w1 { width: 62px; }
.w2 { width: 80px; }
.w3 { width: 95px; }
.h-search { margin-left: auto; width: 162px; height: 26px; display: flex; background: #e1e1e1; }
.h-search input { flex: 1; min-width: 0; padding: 0 4px; border: 0; background: none; outline: 0; }
.h-search button { width: 42px; padding: 3px 0 0 9px; background: #4498ff; clip-path: polygon(10px 0, 100% 0, 100% 100%, 0 100%); }

.h-body { flex: 1; min-height: 0; display: flex; border-top: 2px solid #c4c4c4; }
.h-scroll { flex: 1; min-width: 0; overflow: hidden; }
.vbar { flex: none; width: 9px; }
.vbar i { display: block; height: 94px; border-radius: 4px; background: #c9c9c9; }
.hbar { flex: none; height: 10px; }
.hbar i { display: block; width: 84%; height: 9px; border-radius: 4px; background: #c9c9c9; }

.mat { width: 1015px; table-layout: fixed; border-collapse: separate; border-spacing: 0; line-height: 17px; }
.mat th { height: 25px; padding: 0; border-right: 1px solid #c0c0c0; border-bottom: 1px solid #c0c0c0; background: #e1e1e1; font-weight: 400; }
.mat td { height: 37px; padding: 1px 3px; border-right: 1px solid #e3e3e3; border-bottom: 1px solid #e3e3e3; text-align: center; }
.mat .hl td { height: 30px; background: #efefef; }
.mat td:nth-child(2), .mat td:nth-child(3) { text-align: left; }
.mat td:nth-child(9) { padding: 1px 5px; }
.mat td:nth-child(11) { padding: 1px 0 1px 10px; text-align: left; }
.mat td:nth-child(12) { padding-left: 6px; text-align: left; white-space: nowrap; }
.mat td:first-child { padding-right: 0; }
.mat td div { display: flex; align-items: center; }
.mat td b { width: 39px; font-weight: 400; color: #000; }
.mat td svg { display: block; width: 22px; height: 16px; margin: 0 auto; }
.mat a { color: #4498ff; }
.mat col:nth-child(1) { width: 65px; }
.mat col:nth-child(2) { width: 145px; }
.mat col:nth-child(3) { width: 145px; }
.mat col:nth-child(4) { width: 45px; }
.mat col:nth-child(5) { width: 72px; }
.mat col:nth-child(6) { width: 65px; }
.mat col:nth-child(7) { width: 80px; }
.mat col:nth-child(8) { width: 80px; }
.mat col:nth-child(9) { width: 50px; }
.mat col:nth-child(10) { width: 45px; }
.mat col:nth-child(11) { width: 145px; }
.mat col:nth-child(12) { width: 78px; }

.mark { position: absolute; border: 3px solid #ff2010; border-radius: 3px; pointer-events: none; }
.mark-row { left: -14px; top: 131px; width: 822px; height: 52px; }
```
